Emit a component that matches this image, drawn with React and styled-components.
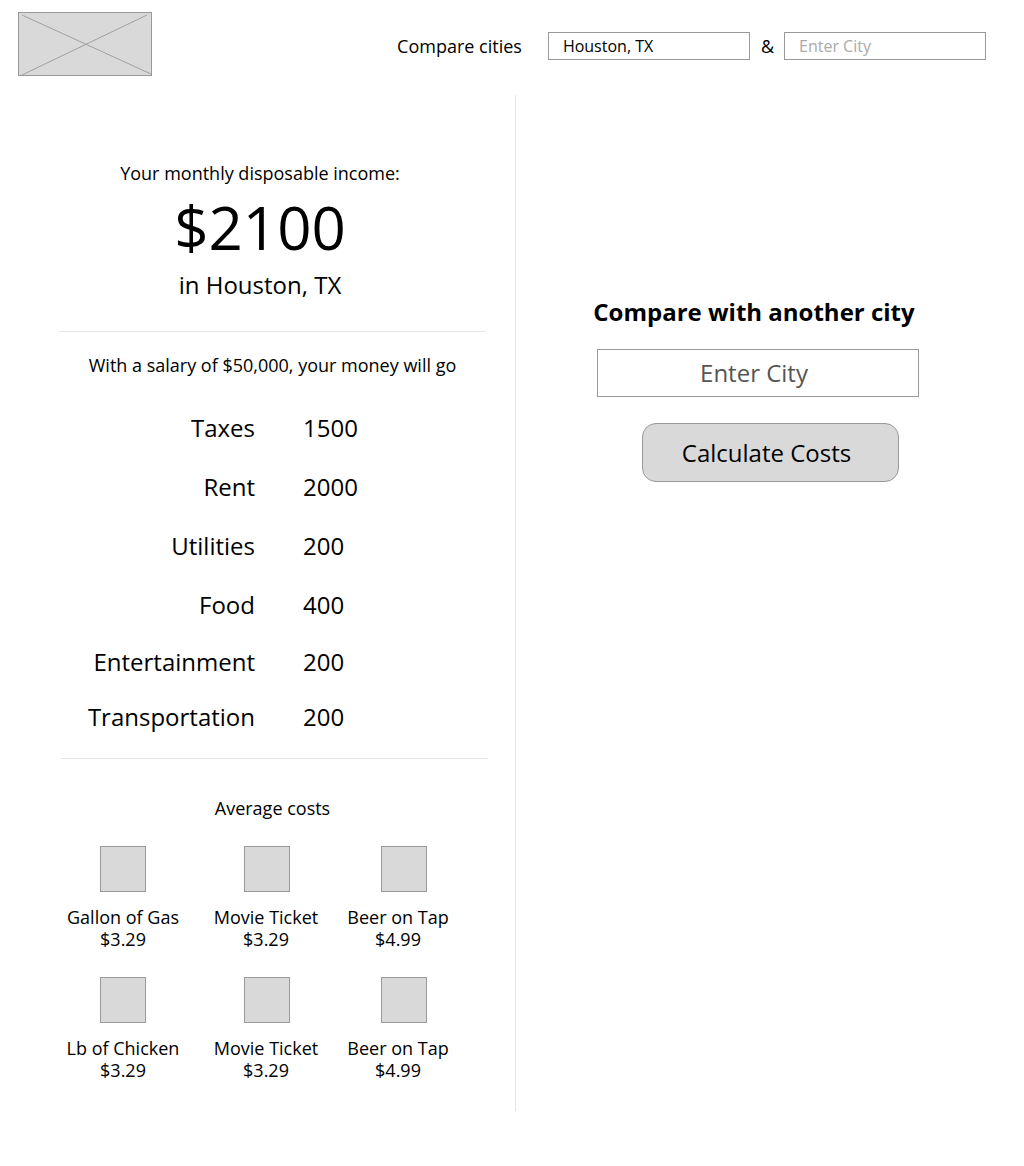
import React from "react";
import styled, { createGlobalStyle } from "styled-components";

const Global = createGlobalStyle`
  html, body { margin: 0; padding: 0; background: #fff; }
  body { font-family: "Open Sans", "Noto Sans", sans-serif; color: #000; }
  * { box-sizing: border-box; }
`;

const Page = styled.div`
  width: 1024px;
  min-height: 1166px;
`;

const Header = styled.header`
  height: 95px;
  display: flex;
  justify-content: space-between;
  align-items: flex-start;
  padding: 12px 38px 0 18px;
`;

const LogoBox = styled.div`
  width: 134px;
  height: 64px;
  background: #d9d9d9;
  border: 1px solid #999;
  svg { display: block; }
`;

const CompareBar = styled.div`
  display: flex;
  align-items: center;
  margin-top: 20px;
  height: 28px;
  font-size: 18px;
`;

const CompareLabel = styled.span`
  margin-right: 26px;
  line-height: 24px;
`;

const Amp = styled.span`
  margin: 0 10px 0 11px;
  font-size: 18px;
`;

const SmallInput = styled.div`
  width: 202px;
  height: 28px;
  border: 1px solid #999;
  padding-left: 14px;
  display: flex;
  align-items: center;
  font-size: 16px;
  color: ${(p) => (p.$placeholder ? "#aaa" : "#000")};
`;

const Main = styled.main`
  display: grid;
  grid-template-columns: 516px 1fr;
  align-items: start;
`;

const LeftCol = styled.section`
  border-right: 1px solid #e6e6e6;
  padding: 66px 29px 30px 59px;
  display: flex;
  flex-direction: column;
`;

const Hero = styled.div`
  padding-right: 25px;
  text-align: center;
`;

const HeroCaption = styled.div`
  font-size: 18px;
  line-height: 24px;
`;

const Amount = styled.div`
  font-size: 60px;
  line-height: 70px;
  margin-top: 7px;
`;

const HeroCity = styled.div`
  font-size: 24px;
  line-height: 32px;
  margin-top: 7px;
`;

const Rule = styled.hr`
  border: 0;
  height: 1px;
  background: #e6e6e6;
  margin: ${(p) => p.$mt}px ${(p) => (p.$shift ? -2 : 0)}px 0 ${(p) => (p.$shift ? 2 : 0)}px;
`;

const Note = styled.div`
  text-align: center;
  font-size: 18px;
  line-height: 24px;
  margin-top: ${(p) => p.$mt}px;
`;

const Table = styled.div`
  margin-top: 35px;
  display: flex;
  flex-direction: column;
`;

const Row = styled.div`
  display: grid;
  grid-template-columns: 196px 1fr;
  column-gap: 48px;
  font-size: 24px;
  line-height: 32px;
  margin-top: ${(p) => p.$mt}px;
`;

const RowLabel = styled.span`
  text-align: right;
`;

const CostGrid = styled.div`
  margin: 26px 0 0 -8px;
  display: grid;
  grid-template-columns: 144px 144px 130px;
  row-gap: 27px;
`;

const CostItem = styled.div`
  display: flex;
  flex-direction: column;
  align-items: center;
  font-size: 18px;
  line-height: 22px;
  text-align: center;
`;

const Thumb = styled.div`
  width: 46px;
  height: 46px;
  background: #d9d9d9;
  border: 1px solid #999;
  margin-bottom: 14px;
`;

const CostText = styled.span`
  margin-right: ${(p) => p.$nudge || 0}px;
  white-space: nowrap;
`;

const RightCol = styled.section`
  padding: 201px 0 0 81px;
  display: flex;
  flex-direction: column;
  align-items: flex-start;
`;

const RightTitle = styled.h2`
  width: 322px;
  margin: 0 0 0 -4px;
  white-space: nowrap;
  text-align: center;
  font-size: 24px;
  line-height: 32px;
  font-weight: 700;
`;

const BigInput = styled.div`
  margin-top: 21px;
  width: 322px;
  height: 48px;
  border: 1px solid #999;
  display: flex;
  align-items: center;
  justify-content: center;
  padding-right: 8px;
  font-size: 24px;
  line-height: 32px;
  color: #555;
`;

const Button = styled.button`
  margin: 26px 0 0 45px;
  width: 257px;
  height: 59px;
  border-radius: 14px;
  border: 1px solid #999;
  background: #d9d9d9;
  font-family: "Open Sans", "Noto Sans", sans-serif;
  font-size: 24px;
  color: #000;
  padding: 0 8px 0 0;
`;

const rows = [
  { label: "Taxes", value: "1500", mt: 0 },
  { label: "Rent", value: "2000", mt: 27 },
  { label: "Utilities", value: "200", mt: 27 },
  { label: "Food", value: "400", mt: 27 },
  { label: "Entertainment", value: "200", mt: 25 },
  { label: "Transportation", value: "200", mt: 23 },
];

const costs = [
  { name: "Gallon of Gas", price: "$3.29", nudge: 0 },
  { name: "Movie Ticket", price: "$3.29", nudge: 2 },
  { name: "Beer on Tap", price: "$4.99", nudge: 12 },
  { name: "Lb of Chicken", price: "$3.29", nudge: 0 },
  { name: "Movie Ticket", price: "$3.29", nudge: 2 },
  { name: "Beer on Tap", price: "$4.99", nudge: 12 },
];

export default function App() {
  return (
    <Page>
      <Global />
      <Header>
        <LogoBox>
          <svg width="132" height="62" viewBox="0 0 132 62">
            <line x1="3" y1="62" x2="128" y2="2" stroke="#a0a0a0" strokeWidth="1" />
            <line x1="3" y1="2" x2="132" y2="61" stroke="#a0a0a0" strokeWidth="1" />
          </svg>
        </LogoBox>
        <CompareBar>
          <CompareLabel>Compare cities</CompareLabel>
          <SmallInput>Houston, TX</SmallInput>
          <Amp>&amp;</Amp>
          <SmallInput $placeholder>Enter City</SmallInput>
        </CompareBar>
      </Header>
      <Main>
        <LeftCol>
          <Hero>
            <HeroCaption>Your monthly disposable income:</HeroCaption>
            <Amount>$2100</Amount>
            <HeroCity>in Houston, TX</HeroCity>
          </Hero>
          <Rule $mt={30} />
          <Note $mt={21}>With a salary of $50,000, your money will go</Note>
          <Table>
            {rows.map((r) => (
              <Row key={r.label} $mt={r.mt}>
                <RowLabel>{r.label}</RowLabel>
                <span>{r.value}</span>
              </Row>
            ))}
          </Table>
          <Rule $mt={25} $shift />
          <Note $mt={37}>Average costs</Note>
          <CostGrid>
            {costs.map((c, i) => (
              <CostItem key={i}>
                <Thumb />
                <CostText $nudge={c.nudge}>{c.name}</CostText>
                <CostText $nudge={c.nudge}>{c.price}</CostText>
              </CostItem>
            ))}
          </CostGrid>
        </LeftCol>
        <RightCol>
          <RightTitle>Compare with another city</RightTitle>
          <BigInput>Enter City</BigInput>
          <Button>Calculate Costs</Button>
        </RightCol>
      </Main>
    </Page>
  );
}
